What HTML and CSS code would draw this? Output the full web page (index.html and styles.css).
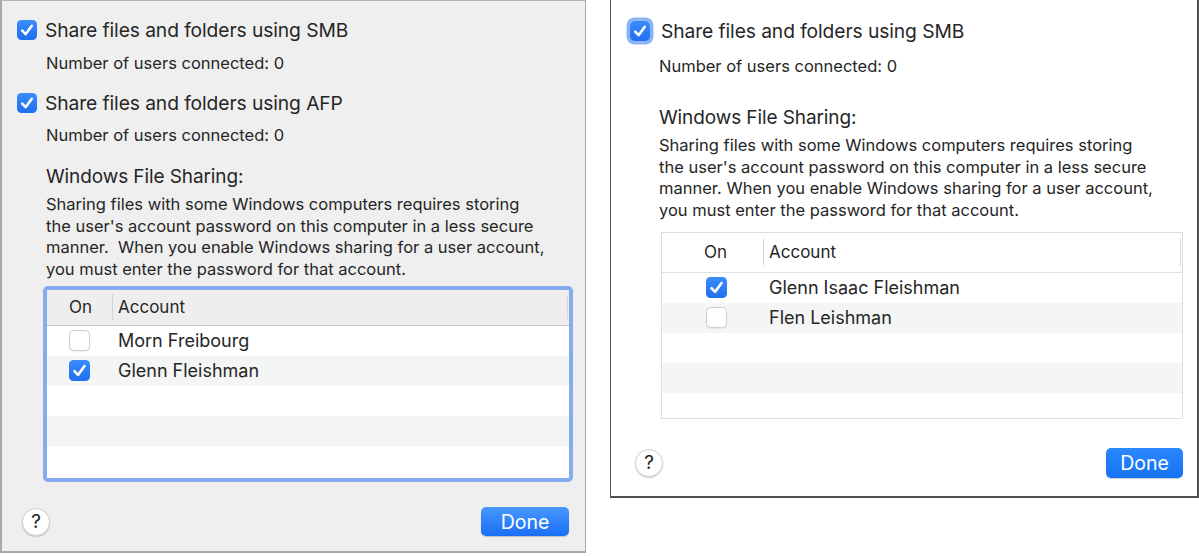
FILE: index.html
```html
<!DOCTYPE html>
<html lang="en">
<head>
<meta charset="utf-8">
<title>File Sharing Options</title>
<link rel="stylesheet" href="styles.css">
</head>
<body>
<div class="page">
  <section class="dlg dlg-a">
    <div class="opt">
      <span class="cb cb-on"><svg viewBox="0 0 20 20"><path d="M5.2 10.6 L8.6 14.2 L14.8 5.8"/></svg></span>
      <span class="opt-label">Share files and folders using SMB</span>
    </div>
    <div class="sub sub-1">Number of users connected: 0</div>
    <div class="opt opt-2">
      <span class="cb cb-on"><svg viewBox="0 0 20 20"><path d="M5.2 10.6 L8.6 14.2 L14.8 5.8"/></svg></span>
      <span class="opt-label">Share files and folders using AFP</span>
    </div>
    <div class="sub sub-2">Number of users connected: 0</div>
    <div class="heading">Windows File Sharing:</div>
    <p class="para">Sharing files with some Windows computers requires storing<br>the user's account password on this computer in a less secure<br>manner.&nbsp; When you enable Windows sharing for a user account,<br>you must enter the password for that account.</p>
    <div class="table table-focus">
      <div class="thead">
        <span class="col-on">On</span>
        <span class="col-acc">Account</span>
      </div>
      <div class="row">
        <span class="col-on"><span class="cb cb-off"></span></span>
        <span class="col-acc">Morn Freibourg</span>
      </div>
      <div class="row row-alt">
        <span class="col-on"><span class="cb cb-on"><svg viewBox="0 0 20 20"><path d="M5.2 10.6 L8.6 14.2 L14.8 5.8"/></svg></span></span>
        <span class="col-acc">Glenn Fleishman</span>
      </div>
      <div class="row"></div>
      <div class="row row-alt"></div>
      <div class="row"></div>
    </div>
    <div class="footer">
      <span class="help">?</span>
      <button class="done">Done</button>
    </div>
  </section>

  <section class="dlg dlg-b">
    <div class="opt">
      <span class="cb cb-on cb-focus"><svg viewBox="0 0 20 20"><path d="M5.2 10.6 L8.6 14.2 L14.8 5.8"/></svg></span>
      <span class="opt-label">Share files and folders using SMB</span>
    </div>
    <div class="sub sub-1">Number of users connected: 0</div>
    <div class="heading">Windows File Sharing:</div>
    <p class="para">Sharing files with some Windows computers requires storing<br>the user's account password on this computer in a less secure<br>manner. When you enable Windows sharing for a user account,<br>you must enter the password for that account.</p>
    <div class="table table-plain">
      <div class="thead">
        <span class="col-on">On</span>
        <span class="col-acc">Account</span>
      </div>
      <div class="row">
        <span class="col-on"><span class="cb cb-on"><svg viewBox="0 0 20 20"><path d="M5.2 10.6 L8.6 14.2 L14.8 5.8"/></svg></span></span>
        <span class="col-acc">Glenn Isaac Fleishman</span>
      </div>
      <div class="row row-alt">
        <span class="col-on"><span class="cb cb-off"></span></span>
        <span class="col-acc">Flen Leishman</span>
      </div>
      <div class="row"></div>
      <div class="row row-alt"></div>
      <div class="row row-last"></div>
    </div>
    <div class="footer">
      <span class="help">?</span>
      <button class="done">Done</button>
    </div>
  </section>
</div>
</body>
</html>
```

FILE: styles.css
```css
html, body {
  margin: 0;
  padding: 0;
  background: #ffffff;
}

body {
  font-family: "Inter", "Liberation Sans", sans-serif;
  color: #262626;
  width: 1199px;
  height: 557px;
  overflow: hidden;
}

.page {
  display: flex;
  align-items: flex-start;
  gap: 24px;
}

/* ---------- dialogs ---------- */
.dlg {
  box-sizing: border-box;
  display: flex;
  flex-direction: column;
  align-items: flex-start;
}

.dlg-a {
  width: 586px;
  height: 553px;
  background: #efefef;
  border-top: 1px solid #b4b4b4;
  border-left: 2px solid #a9a9a9;
  border-right: 1px solid #a9a9a9;
  border-bottom: 2px solid #a9a9a9;
  padding: 14px 16px 0 15px;
}

.dlg-b {
  width: 589px;
  height: 498px;
  background: #ffffff;
  border-left: 1px solid #5a5a5a;
  border-right: 2px solid #4f4f4f;
  border-bottom: 2px solid #4f4f4f;
  padding: 16px 14px 0 19px;
}

/* ---------- checkbox option rows ---------- */
.opt {
  display: flex;
  align-items: center;
  height: 30px;
}

.opt-2 {
  margin-top: 13px;
}

.opt-label {
  font-size: 19.25px;
  margin-left: 8px;
  white-space: nowrap;
  letter-spacing: -0.1px;
}

.dlg-b .opt-label {
  margin-left: 11px;
}

.cb {
  box-sizing: border-box;
  display: inline-flex;
  width: 20px;
  height: 20px;
  border-radius: 4.5px;
  flex: none;
}

.cb svg {
  width: 20px;
  height: 20px;
}

.cb svg path {
  fill: none;
  stroke: #ffffff;
  stroke-width: 2.5;
  stroke-linecap: round;
  stroke-linejoin: round;
}

.cb-on {
  background: linear-gradient(#3b8cfb, #1f6ff0);
}

.cb-off {
  background: #ffffff;
  border: 1px solid #cdcdcd;
  box-shadow: 0 1px 1px rgba(0, 0, 0, 0.06);
}

.cb-focus {
  box-shadow: 0 0 0 3.5px #8db5f6;
}

/* ---------- texts ---------- */
.sub {
  font-size: 16.5px;
  line-height: 24px;
  margin-left: 29px;
  white-space: nowrap;
}

.sub-1 {
  margin-top: 6px;
}

.sub-2 {
  margin-top: 5px;
}

.dlg-b .sub-1 {
  margin-top: 8px;
}

.heading {
  font-size: 19px;
  line-height: 26px;
  margin-left: 29px;
  margin-top: 17px;
  white-space: nowrap;
  letter-spacing: -0.1px;
}

.dlg-b .heading {
  margin-top: 27px;
}

.para {
  font-size: 16.5px;
  line-height: 21.7px;
  margin: 4px 0 0 29px;
  white-space: nowrap;
}

/* ---------- tables ---------- */
.table {
  box-sizing: border-box;
  display: flex;
  flex-direction: column;
  background: #ffffff;
}

.table-focus {
  width: 530px;
  height: 196px;
  margin: 5px 0 0 26px;
  border: 4px solid #86abf0;
  border-radius: 5px;
}

.table-plain {
  width: 522px;
  height: 187px;
  margin: 10px 0 0 31px;
  border: 1px solid #dddddd;
}

.thead {
  display: flex;
  align-items: center;
  flex: none;
  font-size: 17px;
  position: relative;
}

.thead::after {
  content: "";
  position: absolute;
  right: 1px;
  top: 5px;
  bottom: 6px;
  width: 1px;
  background: #d6d6d6;
}

.table-focus .thead {
  height: 35px;
  background: #eeeeee;
  border-bottom: 1px solid #c6c6c6;
}

.table-plain .thead {
  height: 39px;
  background: #ffffff;
  border-bottom: 1px solid #e2e2e2;
}

.col-on {
  box-sizing: border-box;
  flex: none;
  display: flex;
  align-items: center;
}

.table-focus .col-on {
  width: 65px;
  padding-left: 22px;
}

.table-plain .col-on {
  width: 101px;
  padding-left: 42px;
}

.table-plain .row .col-on {
  padding-left: 44px;
}

.col-acc {
  border-left: 1px solid transparent;
  padding-left: 5px;
  white-space: nowrap;
}

.thead .col-acc {
  border-left-color: #d3d3d3;
  line-height: 26px;
}

.row {
  display: flex;
  align-items: center;
  height: 30px;
  flex: none;
  font-size: 18px;
  background: #ffffff;
}

.row-alt {
  background: #f4f5f5;
}

.row-last {
  height: 24px;
}

.row .cb {
  width: 21px;
  height: 21px;
}

.row .cb svg {
  width: 21px;
  height: 21px;
}

/* ---------- footers ---------- */
.footer {
  align-self: stretch;
  display: flex;
  align-items: center;
  justify-content: space-between;
  height: 30px;
  margin-top: 25px;
}

.dlg-b .footer {
  margin-top: 29px;
}

.help {
  box-sizing: border-box;
  width: 28px;
  height: 28px;
  margin-left: 5px;
  border-radius: 50%;
  background: #ffffff;
  border: 1px solid #d2d2d2;
  box-shadow: 0 1px 1.5px rgba(0, 0, 0, 0.18);
  display: flex;
  align-items: center;
  justify-content: center;
  font-size: 19px;
  color: #222222;
}

.done {
  font-family: "Inter", "Liberation Sans", sans-serif;
  height: 29px;
  width: 88px;
  border: none;
  border-radius: 5px;
  background: linear-gradient(#4799fd, #1a6ef4);
  box-shadow: 0 1px 1px rgba(0, 0, 0, 0.2);
  color: #ffffff;
  font-size: 19.5px;
  padding: 0;
}

.dlg-b .done {
  width: 77px;
  height: 30px;
  background: linear-gradient(#2c88fc, #1572f4);
}
```
